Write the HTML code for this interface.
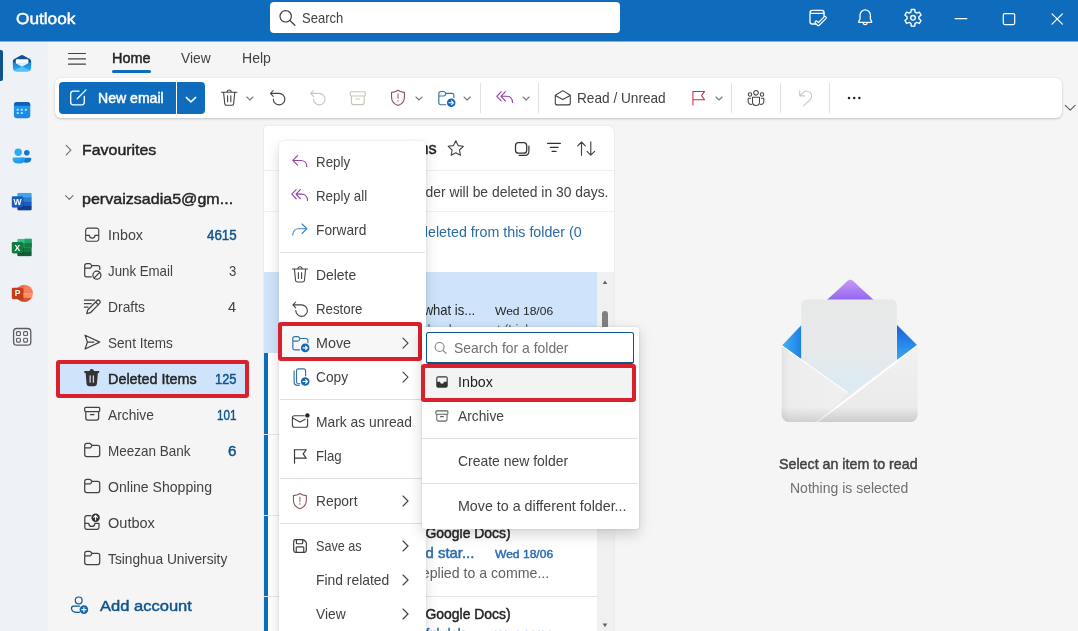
<!DOCTYPE html>
<html lang="en">
<head>
<meta charset="utf-8">
<title>Outlook</title>
<style>
*{box-sizing:border-box;margin:0;padding:0}
html,body{width:1078px;height:631px;overflow:hidden;background:#f5f5f5;font-family:"Liberation Sans",sans-serif;color:#242424}
.layer{position:absolute;left:0;top:0;width:1078px;height:631px;overflow:hidden;will-change:transform}
.layer>div,#list>div{position:absolute}
.t{position:absolute;white-space:nowrap;line-height:1;transform-origin:0 50%}
svg.ic{position:absolute;left:0;top:0;overflow:hidden}
#titlebar{left:0;top:0;width:1078px;height:41px;background:#0f6cbd}
#titleedge{left:0;top:41px;width:1078px;height:1px;background:#7fb0dc}
#rail{left:0;top:42px;width:48px;height:589px;background:#eef2f6}
#railactive{left:0;top:49.500px;width:2.500px;height:31px;background:#0f548c;border-radius:0 2px 2px 0}
#search{left:270px;top:2px;width:350px;height:31px;background:#fff;border-radius:4px}
#tabline{left:112px;top:69.700px;width:38.600px;height:3px;background:#0f6cbd;border-radius:2px}
#ribbon{left:55px;top:78px;width:1006.500px;height:40px;background:#fff;border-radius:6px;box-shadow:0 1px 2.500px rgba(0,0,0,.2),0 0 1px rgba(0,0,0,.12)}
#newmail{left:59px;top:82px;width:117px;height:31.700px;background:#0f6cbd;border-radius:4px 0 0 4px}
#newmaildd{left:177px;top:82px;width:28px;height:31.700px;background:#0f6cbd;border-radius:0 4px 4px 0}
.vsep{width:1px;background:#e0e0e0}
.sep{height:1px;background:#e0e0e0}
#delsel{left:60px;top:364.200px;width:185.500px;height:29.400px;background:#cfe4fa}
#list{left:263.500px;top:125.500px;width:350.500px;height:520px;background:#fff;border-radius:3px 6px 0 0;box-shadow:0 0 2px rgba(0,0,0,.12);overflow:hidden}
#selrow{left:0;top:146px;width:333px;height:81px;background:#cfe4fa}
.rowsep{left:0;width:350px;height:1px;background:#f0f0f0}
.rowsep2{left:0;width:333px;height:1px;background:#e6e6e6}
.ubar{left:.500px;width:4px;background:#0f6cbd}
#track{left:333px;top:146px;width:18px;height:374px;background:#f0f0f0}
#thumb{left:338.700px;top:185.500px;width:5.800px;height:120px;border-radius:3px;background:#808080}
#ctx{left:278.600px;top:140.600px;width:147.400px;height:500px;background:#fff;border-radius:5px;box-shadow:0 6px 14px rgba(0,0,0,.14),0 0 2.500px rgba(0,0,0,.13)}
#movehl{left:280px;top:324px;width:140px;height:35px;background:#f7f7f7}
#sub{left:422px;top:326.500px;width:217.200px;height:202.200px;background:#fff;border-radius:3px;box-shadow:0 5px 14px rgba(0,0,0,.17),0 0 3px rgba(0,0,0,.13)}
#fsearch{left:426px;top:332.200px;width:207.900px;height:31.800px;background:#fff;border:1.700px solid #0f548c;border-bottom-width:2px;border-radius:2.500px}
#inboxhl{left:423px;top:366px;width:211px;height:34px;background:#f3f3f3}
.redbox{position:absolute;border:4px solid #d9212e;border-radius:3px}

</style>
</head>
<body>
<div class="layer" id="base">
<div id="titlebar"></div><div id="titleedge"></div>
<div id="rail"></div><div id="railactive"></div>
<div id="search"></div>
<div id="tabline"></div>
<div id="ribbon"></div>
<div id="newmail"></div><div id="newmaildd"></div>
<div class="vsep" style="left:480px;top:83px;height:30px"></div>
<div class="vsep" style="left:538px;top:83px;height:30px"></div>
<div class="vsep" style="left:731px;top:83px;height:30px"></div>
<div class="vsep" style="left:780px;top:83px;height:30px"></div>
<div class="vsep" style="left:829px;top:83px;height:30px"></div>
<div id="delsel"></div>
<div id="list">
 <div id="selrow"></div>
 <div class="rowsep" style="top:44px"></div>
 <div class="rowsep" style="top:85px"></div>
 <div class="rowsep2" style="top:308px"></div>
 <div class="rowsep2" style="top:389px"></div>
 <div class="rowsep2" style="top:470px"></div>
 <div class="ubar" style="top:227.500px;height:80.500px"></div>
 <div class="ubar" style="top:309px;height:80px"></div>
 <div class="ubar" style="top:390px;height:80px"></div>
 <div class="ubar" style="top:471px;height:80px"></div>
 <div id="track"></div><div id="thumb"></div>
</div>
<svg class="ic" width="60" height="631" viewBox="0 0 60 631">
<defs>
<linearGradient id="mg1" x1="0" y1="0" x2="0" y2="1"><stop offset="0" stop-color="#1b78d0"/><stop offset="1" stop-color="#35b5f2"/></linearGradient>
<linearGradient id="cg1" x1="0" y1="0" x2="0" y2="1"><stop offset="0" stop-color="#229cf0"/><stop offset="1" stop-color="#1b86e2"/></linearGradient>
<linearGradient id="pg1" x1="0" y1="0" x2="1" y2="1"><stop offset="0" stop-color="#2bb0f2"/><stop offset="1" stop-color="#1d8fe6"/></linearGradient>
<clipPath id="ppc"><circle cx="24.2" cy="293.4" r="8.7"/></clipPath>
</defs>
<path fill="#0f4f94" d="M12.900 65v-3.600c0-1 .5-1.800 1.400-2.300l6.800-3.900a1.800 1.800 0 0 1 1.800 0l6.800 3.900c.9.5 1.400 1.300 1.400 2.300V65z"/>
<rect x="15.800" y="59.200" width="12.600" height="8" rx="1.400" fill="#ffffff"/>
<path fill="#d9effc" d="M15.800 62.600h12.600v4H15.800z"/>
<path fill="url(#mg1)" d="M12.900 61.700l9.100 5 9.100-5v5.800a4 4 0 0 1-4 4H16.900a4 4 0 0 1-4-4z"/>
<path fill="#52c8f8" opacity=".9" d="M14.100 70.300L22 66.500l7.900 3.800a4 4 0 0 1-2.800 1.200H16.900a4 4 0 0 1-2.800-1.200z"/>
<rect x="13.900" y="101.900" width="16.400" height="16.300" rx="3.300" fill="url(#cg1)"/>
<path fill="#0f60b6" d="M13.900 105.700v-.5a3.300 3.300 0 0 1 3.300-3.300h9.800a3.300 3.300 0 0 1 3.300 3.300v.5z"/>
<rect x="16.70" y="108.800" width="2" height="2" rx=".6" fill="#a5ecff"/>
<rect x="20.80" y="108.800" width="2" height="2" rx=".6" fill="#a5ecff"/>
<rect x="24.80" y="108.800" width="2" height="2" rx=".6" fill="#a5ecff"/>
<rect x="16.70" y="112.100" width="2" height="2" rx=".6" fill="#a5ecff"/>
<rect x="20.80" y="112.100" width="2" height="2" rx=".6" fill="#a5ecff"/>
<circle cx="26.800" cy="152.700" r="2.800" fill="#1678d3"/>
<path fill="#1678d3" d="M20.500 157.700h9.500a1.300 1.300 0 0 1 1.300 1.300c0 2.200-1.900 3.700-4.700 3.700s-6.100-1.500-6.100-5z"/>
<circle cx="18.200" cy="152.300" r="3.700" fill="#2aaef3"/>
<path fill="url(#pg1)" d="M13.900 157.600h9.800a1.300 1.300 0 0 1 1.300 1.300c0 2.800-2.400 4.700-6.200 4.700s-6.200-1.900-6.200-4.700a1.300 1.300 0 0 1 1.300-1.300z"/>
<clipPath id="ocW"><rect x="17.2" y="192.8" width="14.6" height="17.6" rx="1.300"/></clipPath>
<g clip-path="url(#ocW)">
<rect x="17.2" y="192.80" width="14.6" height="4.70" fill="#41a5ee"/>
<rect x="17.2" y="197.20" width="14.6" height="4.70" fill="#2b7cd3"/>
<rect x="17.2" y="201.60" width="14.6" height="4.70" fill="#185abd"/>
<rect x="17.2" y="206.00" width="14.6" height="4.70" fill="#103f91"/>
</g>
<rect x="12.600" y="197.0" width="11.200" height="11.200" rx="1.200" fill="#000" opacity=".18"/>
<rect x="11.800" y="196.2" width="11.200" height="11.200" rx="1.200" fill="#1a5dbe"/>
<text x="17.400" y="204.8" font-family="Liberation Sans, sans-serif" font-weight="700" font-size="8.500" fill="#fff" text-anchor="middle">W</text>
<clipPath id="ocX"><rect x="17.2" y="238.7" width="14.6" height="17.6" rx="1.300"/></clipPath>
<g clip-path="url(#ocX)">
<rect x="17.2" y="238.70" width="14.6" height="4.70" fill="#33c481"/>
<rect x="17.2" y="243.10" width="14.6" height="4.70" fill="#21a366"/>
<rect x="17.2" y="247.50" width="14.6" height="4.70" fill="#107c41"/>
<rect x="17.2" y="251.90" width="14.6" height="4.70" fill="#185c37"/>
</g>
<rect x="12.600" y="242.9" width="11.200" height="11.200" rx="1.200" fill="#000" opacity=".18"/>
<rect x="11.800" y="242.1" width="11.200" height="11.200" rx="1.200" fill="#107c41"/>
<text x="17.400" y="250.7" font-family="Liberation Sans, sans-serif" font-weight="700" font-size="8.500" fill="#fff" text-anchor="middle">X</text>
<rect x="24.500" y="238.700" width="7.300" height="4.400" fill="#21a366"/><rect x="24.500" y="243.100" width="7.300" height="4.400" fill="#107c41"/><rect x="24.500" y="247.500" width="7.300" height="4.400" fill="#185c37" opacity=".0"/>
<g clip-path="url(#ppc)"><rect x="15" y="284" width="18" height="9.400" fill="#ed6c47"/><rect x="15" y="293.400" width="18" height="5" fill="#ff8f6b"/><rect x="15" y="297.800" width="18" height="5" fill="#d35230"/><rect x="24.200" y="284" width="9" height="9.400" fill="#ff8f6b" opacity=".55"/></g>
<rect x="12.600" y="288.500" width="11.200" height="11.200" rx="1.200" fill="#000" opacity=".18"/>
<rect x="11.800" y="287.700" width="11.200" height="11.200" rx="1.200" fill="#c43e1c"/>
<text x="17.500" y="296.400" font-family="Liberation Sans, sans-serif" font-weight="700" font-size="8.500" fill="#fff" text-anchor="middle">P</text>
<rect x="13.600" y="328.500" width="17.200" height="16.700" rx="3.200" fill="none" stroke="#5c5c5c" stroke-width="1.300"/>
<rect x="16.5" y="331.6" width="3.900" height="3.900" rx="1" fill="none" stroke="#5c5c5c" stroke-width="1.100"/>
<rect x="16.5" y="338.2" width="3.900" height="3.900" rx="1" fill="none" stroke="#5c5c5c" stroke-width="1.100"/>
<rect x="23.6" y="331.6" width="3.900" height="3.900" rx="1" fill="none" stroke="#5c5c5c" stroke-width="1.100"/>
<rect x="23.6" y="338.2" width="3.900" height="3.900" rx="1" fill="none" stroke="#5c5c5c" stroke-width="1.100"/>
</svg>
<svg class="ic" width="1078" height="631" viewBox="0 0 1078 631">
<defs>
<linearGradient id="ev1" x1="0" y1="0" x2="0" y2="1"><stop offset="0" stop-color="#c79bf5"/><stop offset="1" stop-color="#8d5ff0"/></linearGradient>
<linearGradient id="ev2" x1="0" y1="0" x2="0" y2="1"><stop offset="0" stop-color="#e8e8e8"/><stop offset=".4" stop-color="#e7e9ea"/><stop offset="1" stop-color="#d6ebf8"/></linearGradient>
<linearGradient id="ev3" x1="0" y1="0" x2="1" y2="0"><stop offset="0" stop-color="#45b2f4"/><stop offset="1" stop-color="#1c7fe2"/></linearGradient>
<linearGradient id="ev4" x1="0" y1="0" x2="0" y2="1"><stop offset="0" stop-color="#1560dc"/><stop offset="1" stop-color="#3aaaf2"/></linearGradient>
<linearGradient id="ev5" x1="0" y1="0" x2="0" y2="1"><stop offset="0" stop-color="#eeeeee"/><stop offset=".78" stop-color="#e9e9e9"/><stop offset="1" stop-color="#cfcfcf"/></linearGradient>
<linearGradient id="ev6" x1="0" y1="0" x2="1" y2="0"><stop offset="0" stop-color="#e2e2e2"/><stop offset=".12" stop-color="#ededed"/><stop offset="1" stop-color="#f0f0f0"/></linearGradient>
<linearGradient id="ev7" x1="0" y1="0" x2="0" y2="1"><stop offset="0" stop-color="#f1f1f1"/><stop offset="1" stop-color="#e9e9e9"/></linearGradient>
<linearGradient id="ev8" x1="0" y1="0" x2="0" y2="1"><stop offset="0" stop-color="#000" stop-opacity="0"/><stop offset="1" stop-color="#000" stop-opacity=".13"/></linearGradient>
<clipPath id="evc"><path d="M781.600 330h136v84.500a7.500 7.500 0 0 1-7.500 7.500H789.100a7.500 7.500 0 0 1-7.500-7.500z"/></clipPath>
</defs>
<path fill="url(#ev1)" d="M843 285.200C847 281.300 848.300 279.800 850.300 279.800C852.300 279.800 853.600 281.300 857.600 285.200L876 302H824.600z"/>
<path fill="url(#ev3)" d="M782 345.500l19.500-20.500v36z"/>
<path fill="url(#ev4)" d="M917.500 345.500l-20.500-20.500v36z"/>
<rect x="801.300" y="299.500" width="95.400" height="112" rx="5" fill="url(#ev2)"/>
<g clip-path="url(#evc)">
<path fill="url(#ev5)" d="M781.600 345.200l68 48.500 68-48.500v77h-136z"/>
<path fill="url(#ev6)" d="M781.600 345.200L848 392.600 818 423h-36.400z"/>
<path fill="url(#ev7)" d="M917.600 345v78H816z"/>
<path fill="none" stroke="#ffffff" stroke-width="1.800" stroke-linecap="round" d="M917.400 345.800L816.500 422.500"/>
<path fill="none" stroke="#ffffff" stroke-width="1.100" opacity=".85" stroke-linecap="round" d="M782 346l65 46.200"/>
<rect x="781" y="407" width="138" height="15.500" fill="url(#ev8)"/>
</g>
</svg>
<svg class="ic" width="1078" height="631" viewBox="0 0 1078 631">
<circle cx="285.700" cy="16.300" r="5.700" fill="none" stroke="#424242" stroke-width="1.2" stroke-linecap="round" stroke-linejoin="round"/><path fill="none" stroke="#424242" stroke-width="1.3" stroke-linecap="round" stroke-linejoin="round" d="M289.900 20.500l5 4.700"/>
<path fill="none" stroke="#ffffff" stroke-width="1.3" stroke-linecap="round" stroke-linejoin="round" d="M816 24h-3.700a2.300 2.300 0 0 1-2.300-2.300v-9a2.300 2.300 0 0 1 2.300-2.300h9.500a2.300 2.300 0 0 1 2.300 2.300v4.300M810.200 13.400h13.700"/>
<path fill="none" stroke="#fff" stroke-width="3.700" stroke-linecap="round" stroke-linejoin="round" d="M816.300 22.300l2.100 2.100 6.600-6.600"/>
<path fill="none" stroke="#0f6cbd" stroke-width="1.300" stroke-linecap="round" stroke-linejoin="round" d="M816.300 22.300l2.100 2.100 6.600-6.600"/>
<path fill="none" stroke="#ffffff" stroke-width="1.3" stroke-linecap="round" stroke-linejoin="round" d="M865.200 9.900a5.200 5.200 0 0 0-5.200 5.200v3.900l-1.300 2.500a.6.600 0 0 0 .5.900h12a.6.600 0 0 0 .5-.9l-1.300-2.500v-3.900a5.200 5.200 0 0 0-5.200-5.200zM863.100 22.900a2.150 2.150 0 0 0 4.200 0"/>
<path fill="none" stroke="#fff" stroke-width="1.400" stroke-linejoin="round" d="M911.31 9.47L914.69 9.47L915.11 12.18L916.81 13.16L919.37 12.17L921.06 15.10L918.92 16.82L918.92 18.78L921.06 20.50L919.37 23.43L916.81 22.44L915.11 23.42L914.69 26.13L911.31 26.13L910.89 23.42L909.19 22.44L906.63 23.43L904.94 20.50L907.08 18.78L907.08 16.82L904.94 15.10L906.63 12.17L909.19 13.16L910.89 12.18z"/><circle cx="913.0" cy="17.8" r="2.300" fill="none" stroke="#ffffff" stroke-width="1.4" stroke-linecap="round" stroke-linejoin="round"/>
<path fill="none" stroke="#ffffff" stroke-width="1.2" stroke-linecap="round" stroke-linejoin="round" d="M955.200 18.700h11.600"/>
<rect x="1003.300" y="13.600" width="11.400" height="11" rx="1.500" fill="none" stroke="#ffffff" stroke-width="1.2" stroke-linecap="round" stroke-linejoin="round"/>
<path fill="none" stroke="#ffffff" stroke-width="1.2" stroke-linecap="round" stroke-linejoin="round" d="M1052 13.800l10.400 10.400M1062.400 13.800L1052 24.200"/>
<path fill="none" stroke="#424242" stroke-width="1.2" stroke-linecap="round" stroke-linejoin="round" d="M68.500 53.500h17M68.500 58.800h17M68.500 64.200h17"/>
<path fill="none" stroke="#ffffff" stroke-width="1.3" stroke-linecap="round" stroke-linejoin="round" d="M79 91.200h-5.800a2.500 2.500 0 0 0-2.500 2.500v8.600a2.500 2.500 0 0 0 2.500 2.500h8.600a2.500 2.500 0 0 0 2.500-2.500v-5.800M77.200 98.700l8.800-8.800"/>
<path fill="none" stroke="#ffffff" stroke-width="1.5" stroke-linecap="round" stroke-linejoin="round" d="M186.200 97.400l4.750 4.500 4.750-4.500"/>
<g transform="translate(219.20 87.80) scale(1.0000)" ><path fill="none" stroke="#434343" stroke-width="1.1" stroke-linecap="round" stroke-linejoin="round" d="M8 4.200a2 2 0 0 1 4 0M2.300 4.500h15.400M4.400 4.500l1.150 11.300a1.900 1.900 0 0 0 1.900 1.700h5.100a1.900 1.900 0 0 0 1.900-1.700l1.150-11.300M8.400 8v6M11.600 8v6"/></g>
<g transform="translate(246.20 96.30) scale(1.0000)" ><path fill="none" stroke="#7a7a7a" stroke-width="1.1" stroke-linecap="round" stroke-linejoin="round" d="M.6.700l3.100 3 3.100-3"/></g>
<g transform="translate(270.5 93.4)"><path fill="none" stroke="#434343" stroke-width="1.1" stroke-linecap="round" stroke-linejoin="round" d="M2.7 -2.900L0 0l2.700 2.900M0 0h8.600a5.750 5.750 0 1 1-5.750 5.750"/></g>
<g transform="translate(310.7 93.4)"><path fill="none" stroke="#c6c6c6" stroke-width="1.1" stroke-linecap="round" stroke-linejoin="round" d="M2.7 -2.900L0 0l2.700 2.900M0 0h8.600a5.750 5.750 0 1 1-5.750 5.750"/></g>
<g transform="translate(347.80 88.20) scale(1.0000)" ><path fill="none" stroke="#c3c9ad" stroke-width="1.1" stroke-linecap="round" stroke-linejoin="round" d="M2.500 4.600a1 1 0 0 1 1-1h13a1 1 0 0 1 1 1v2.200a1 1 0 0 1-1 1h-13a1 1 0 0 1-1-1zM3.600 7.800v6.600a2 2 0 0 0 2 2h8.800a2 2 0 0 0 2-2V7.800M8.200 10.800h3.600"/></g>
<g transform="translate(388.80 88.10) scale(0.9200)" ><path fill="none" stroke="#8f5258" stroke-width="1.2" stroke-linecap="round" stroke-linejoin="round" d="M10 2.400c2 1.500 4.200 2.200 7 2.300v5.200c0 4.200-2.600 7.400-7 9-4.400-1.600-7-4.800-7-9v-5.200c2.800-.1 5-.8 7-2.300z"/><path fill="none" stroke="#b47880" stroke-width="1.4" stroke-linecap="round" stroke-linejoin="round" d="M10 6.300v4.800"/><circle cx="10" cy="13.700" r=".9" fill="#b47880"/></g>
<g transform="translate(415.30 96.30) scale(1.0000)" ><path fill="none" stroke="#7a7a7a" stroke-width="1.1" stroke-linecap="round" stroke-linejoin="round" d="M.6.700l3.100 3 3.100-3"/></g>
<g transform="translate(436.40 88.40) scale(1.0000)" ><path fill="none" stroke="#2f73a6" stroke-width="1.15" stroke-linecap="round" stroke-linejoin="round" d="M9.2 16.3H4.3a1.9 1.9 0 0 1-1.9-1.9V5a1.9 1.9 0 0 1 1.9-1.9h2.9c.5 0 1 .2 1.3.6l1.2 1.3h5.9a1.9 1.9 0 0 1 1.9 1.9v2.3M2.4 7.6h4.9c.5 0 1-.2 1.3-.6L9.7 5"/><circle cx="14.800" cy="14.400" r="4.300" fill="#1469b5"/><path fill="none" stroke="#fff" stroke-width="1.1" stroke-linecap="round" stroke-linejoin="round" d="M12.600 14.400h4.300M15.200 12.600l1.800 1.800-1.800 1.800"/></g>
<g transform="translate(463.40 96.30) scale(1.0000)" ><path fill="none" stroke="#7a7a7a" stroke-width="1.1" stroke-linecap="round" stroke-linejoin="round" d="M.6.700l3.100 3 3.100-3"/></g>
<g transform="translate(495.30 88.30) scale(0.9500)" ><path fill="none" stroke="#8e44a3" stroke-width="1.2" stroke-linecap="round" stroke-linejoin="round" d="M6.2 3.6L1.6 8.4l4.6 4.8M10.6 3.6L6 8.4l4.6 4.8M6.3 8.4h5.6c3.6 0 6.2 2.6 6.2 6.6"/></g>
<g transform="translate(522.40 96.30) scale(1.0000)" ><path fill="none" stroke="#7a7a7a" stroke-width="1.1" stroke-linecap="round" stroke-linejoin="round" d="M.6.700l3.100 3 3.100-3"/></g>
<g transform="translate(552.80 87.60) scale(1.0000)" ><path fill="none" stroke="#434343" stroke-width="1.1" stroke-linecap="round" stroke-linejoin="round" d="M2.5 7.6L10 3l7.5 4.6v7.7a2 2 0 0 1-2 2h-11a2 2 0 0 1-2-2zM2.6 7.8L10 12l7.4-4.2"/></g>
<g transform="translate(689.50 88.20) scale(0.9500)" ><path fill="none" stroke="#c4314b" stroke-width="1.1" stroke-linecap="round" stroke-linejoin="round" d="M3.6 17.6V3.2M3.6 3.4h12.3l-3.2 4.4 3.2 4.4H3.6"/></g>
<g transform="translate(715.30 96.30) scale(1.0000)" ><path fill="none" stroke="#7a7a7a" stroke-width="1.1" stroke-linecap="round" stroke-linejoin="round" d="M.6.700l3.100 3 3.100-3"/></g>
<g transform="translate(746.00 88.20) scale(1.0000)" ><circle cx="10" cy="4.6" r="2.3" fill="none" stroke="#434343" stroke-width="1.05" stroke-linecap="round" stroke-linejoin="round"/><circle cx="4" cy="6.2" r="1.7" fill="none" stroke="#434343" stroke-width="1.05" stroke-linecap="round" stroke-linejoin="round"/><circle cx="16" cy="6.2" r="1.7" fill="none" stroke="#434343" stroke-width="1.05" stroke-linecap="round" stroke-linejoin="round"/><path fill="none" stroke="#434343" stroke-width="1.05" stroke-linecap="round" stroke-linejoin="round" d="M6.5 9h7v4.8a3.5 3.5 0 0 1-7 0zM4.6 10H2.2v3.4a2.8 2.8 0 0 0 3.6 2.7M15.4 10h2.4v3.4a2.8 2.8 0 0 1-3.6 2.7"/></g>
<g transform="translate(796.50 88.40) scale(0.9500)" ><path fill="none" stroke="#c8c8c8" stroke-width="1.2" stroke-linecap="round" stroke-linejoin="round" d="M3.4 2.6v5.2h5.2M3.8 7.4l3.4-3.1a5.2 5.2 0 0 1 7.2 7.5l-7 6.6"/></g>
<circle cx="849" cy="98" r="1.250" fill="#242424"/><circle cx="854.200" cy="98" r="1.250" fill="#242424"/><circle cx="859.400" cy="98" r="1.250" fill="#242424"/>
<path fill="none" stroke="#616161" stroke-width="1.2" stroke-linecap="round" stroke-linejoin="round" d="M1065.300 105.300l4.900 4.900 4.900-4.900"/>
<path fill="none" stroke="#707070" stroke-width="1.15" stroke-linecap="round" stroke-linejoin="round" d="M66.200 145.400l4.700 4.700-4.700 4.700"/>
<path fill="none" stroke="#707070" stroke-width="1.15" stroke-linecap="round" stroke-linejoin="round" d="M65.600 195.700l3.700 3.700 3.700-3.700"/>
<g transform="translate(83.10 225.60) scale(0.9100)" ><path fill="none" stroke="#424242" stroke-width="1.25" stroke-linecap="round" stroke-linejoin="round" d="M2.8 5.2a2.4 2.4 0 0 1 2.4-2.4h9.6a2.4 2.4 0 0 1 2.4 2.4v9.6a2.4 2.4 0 0 1-2.4 2.4H5.2a2.4 2.4 0 0 1-2.4-2.4zM2.9 10.8h4.1a3 3 0 0 0 6 0h4.1"/></g>
<g transform="translate(82.30 260.60) scale(1.0000)" ><path fill="none" stroke="#424242" stroke-width="1.25" stroke-linecap="round" stroke-linejoin="round" d="M9 16.2H4.3a1.9 1.9 0 0 1-1.9-1.9V5a1.9 1.9 0 0 1 1.9-1.9h2.9c.5 0 1 .2 1.3.6l1.2 1.3h5.9a1.9 1.9 0 0 1 1.9 1.9v2.1M2.4 7.6h4.9c.5 0 1-.2 1.3-.6L9.7 5"/><circle cx="14.6" cy="14.6" r="4" fill="none" stroke="#424242" stroke-width="1.25" stroke-linecap="round" stroke-linejoin="round"/><path fill="none" stroke="#424242" stroke-width="1.25" stroke-linecap="round" stroke-linejoin="round" d="M11.9 17.3l5.4-5.4"/></g>
<g transform="translate(82.00 296.60) scale(1.0000)" ><path fill="none" stroke="#424242" stroke-width="1.25" stroke-linecap="round" stroke-linejoin="round" d="M2.4 3.6h10.2M2.4 7.1h6.8M2.4 10.6h3.6"/><path fill="none" stroke="#424242" stroke-width="1.25" stroke-linecap="round" stroke-linejoin="round" d="M14.9 4.1a1.9 1.9 0 0 1 2.7 2.7l-9.2 9.3-3.7 1 1-3.7zM13.6 5.4l2.7 2.7"/></g>
<g transform="translate(82.20 332.10) scale(1.0000)" ><path fill="none" stroke="#424242" stroke-width="1.25" stroke-linecap="round" stroke-linejoin="round" d="M2.9 3.1l14.6 6.9-14.6 6.9 2.3-6.9zM5.2 10h6.4"/></g>
<g transform="translate(81.00 367.20) scale(1.0750)" ><path fill="#333" d="M8 3.6a2 2 0 0 1 4 0h4.2a.9.9 0 0 1 0 1.8h-.5l-.9 10.3a2.2 2.2 0 0 1-2.2 2H7.4a2.2 2.2 0 0 1-2.2-2L4.3 5.4h-.5a.9.9 0 0 1 0-1.8z"/><path fill="none" stroke="#cfe4fa" stroke-width="1.1" stroke-linecap="round" d="M8.5 8v6M11.5 8v6"/></g>
<g transform="translate(82.20 403.70) scale(1.0000)" ><path fill="none" stroke="#424242" stroke-width="1.25" stroke-linecap="round" stroke-linejoin="round" d="M2.500 4.600a1 1 0 0 1 1-1h13a1 1 0 0 1 1 1v2.200a1 1 0 0 1-1 1h-13a1 1 0 0 1-1-1zM3.600 7.800v6.600a2 2 0 0 0 2 2h8.800a2 2 0 0 0 2-2V7.800M8.200 10.800h3.600"/></g>
<g transform="translate(82.20 440.00) scale(1.0000)" ><path fill="none" stroke="#424242" stroke-width="1.25" stroke-linecap="round" stroke-linejoin="round" d="M2.5 5.4a2 2 0 0 1 2-2h2.8c.5 0 1 .2 1.3.6l1.3 1.4h5.6a2 2 0 0 1 2 2v7.2a2 2 0 0 1-2 2h-11a2 2 0 0 1-2-2zM2.5 7.9h4.8c.5 0 1-.2 1.3-.6l1.3-1.9"/></g>
<g transform="translate(82.20 476.00) scale(1.0000)" ><path fill="none" stroke="#424242" stroke-width="1.25" stroke-linecap="round" stroke-linejoin="round" d="M2.5 5.4a2 2 0 0 1 2-2h2.8c.5 0 1 .2 1.3.6l1.3 1.4h5.6a2 2 0 0 1 2 2v7.2a2 2 0 0 1-2 2h-11a2 2 0 0 1-2-2zM2.5 7.9h4.8c.5 0 1-.2 1.3-.6l1.3-1.9"/></g>
<g transform="translate(82.20 512.00) scale(1.0000)" ><path fill="none" stroke="#424242" stroke-width="1.25" stroke-linecap="round" stroke-linejoin="round" d="M8.6 3.6H5a2.4 2.4 0 0 0-2.4 2.4v9A2.4 2.4 0 0 0 5 17.4h9.4a2.4 2.4 0 0 0 2.4-2.4v-3.4M2.7 11.4h3.9a3 3 0 0 0 6 0h4"/><circle cx="13.400" cy="5.700" r="4.200" fill="#333"/><path fill="none" stroke="#fff" stroke-width="1.1" stroke-linecap="round" stroke-linejoin="round" d="M13.400 8V3.500M11.600 5.300l1.800-1.800 1.800 1.800"/></g>
<g transform="translate(82.20 548.00) scale(1.0000)" ><path fill="none" stroke="#424242" stroke-width="1.25" stroke-linecap="round" stroke-linejoin="round" d="M2.5 5.4a2 2 0 0 1 2-2h2.8c.5 0 1 .2 1.3.6l1.3 1.4h5.6a2 2 0 0 1 2 2v7.2a2 2 0 0 1-2 2h-11a2 2 0 0 1-2-2zM2.5 7.9h4.8c.5 0 1-.2 1.3-.6l1.3-1.9"/></g>
<g transform="translate(68.50 595.50) scale(1.0000)" ><circle cx="10.200" cy="4.900" r="3.400" fill="none" stroke="#0f548c" stroke-width="1.2" stroke-linecap="round" stroke-linejoin="round"/><path fill="none" stroke="#0f548c" stroke-width="1.2" stroke-linecap="round" stroke-linejoin="round" d="M11 10.600H5.200a2.200 2.200 0 0 0-2.200 2.200c0 2.400 2.100 4.100 5.900 4.100.8 0 1.500-.1 2.100-.2"/><circle cx="15.400" cy="14.100" r="4.300" fill="#1467b0"/><path fill="none" stroke="#fff" stroke-width="1.200" stroke-linecap="round" d="M15.400 12v4.200M13.300 14.100h4.200"/></g>
<g transform="translate(445.80 138.30) scale(1.0000)" ><path fill="none" stroke="#434343" stroke-width="1.1" stroke-linecap="round" stroke-linejoin="round" d="M10 2.4l2.3 4.9 5.3.7-3.900 3.700.950 5.300L10 14.400l-4.650 2.600.950-5.300L2.400 8l5.300-.7z"/></g>
<rect x="515.500" y="142.700" width="11.200" height="10.500" rx="3" fill="none" stroke="#333" stroke-width="1.25" stroke-linecap="round" stroke-linejoin="round"/><path fill="none" stroke="#333" stroke-width="1.2" stroke-linecap="round" stroke-linejoin="round" d="M528.900 146.200v5.600a3.500 3.500 0 0 1-3.500 3.500h-6.300"/>
<path fill="none" stroke="#333" stroke-width="1.35" stroke-linecap="round" stroke-linejoin="round" d="M547.600 143.300h12.800M550.500 147.400h7.400M552.200 151.400h3.800"/>
<path fill="none" stroke="#434343" stroke-width="1.15" stroke-linecap="round" stroke-linejoin="round" d="M581.500 155.300v-13.200M577.700 145.800l3.800-3.800 3.800 3.800M590.800 141.900v13.200M587 151.400l3.800 3.800 3.800-3.800"/>
<path fill="#616161" d="M602.700 284l2.300-3.600 2.300 3.600z"/><path fill="#616161" d="M602.700 623.600l2.300 3.600 2.300-3.600z"/>
</svg>
<span class="t" style="left:15.8px;top:10.6px;font-size:15.8px;color:#ffffff;transform:scaleX(1.0908) rotate(0.03deg);-webkit-text-stroke:.45px #ffffff">Outlook</span>
<span class="t" style="left:302.0px;top:11.0px;font-size:14.2px;color:#424242;transform:scaleX(0.9187)">Search</span>
<span class="t" style="left:112.0px;top:51.0px;font-size:14.2px;color:#242424;transform:scaleX(1.0196);-webkit-text-stroke:.45px #242424">Home</span>
<span class="t" style="left:181.0px;top:51.0px;font-size:14.2px;color:#424242;transform:scaleX(0.9738)">View</span>
<span class="t" style="left:241.9px;top:51.0px;font-size:14.2px;color:#424242;transform:scaleX(0.9901)">Help</span>
<span class="t" style="left:97.8px;top:91.0px;font-size:14.2px;color:#ffffff;transform:scaleX(0.9919);-webkit-text-stroke:.45px #ffffff">New email</span>
<span class="t" style="left:577.2px;top:91.0px;font-size:14.2px;color:#424242;transform:scaleX(0.9612)">Read / Unread</span>
<span class="t" style="left:82.0px;top:142.0px;font-size:15.3px;color:#242424;transform:scaleX(1.0403);-webkit-text-stroke:.45px #242424">Favourites</span>
<span class="t" style="left:82.0px;top:191.0px;font-size:15.3px;color:#242424;transform:scaleX(1.0499);-webkit-text-stroke:.45px #242424">pervaizsadia5@gm...</span>
<span class="t" style="left:108.1px;top:228.0px;font-size:14.2px;color:#424242;transform:scaleX(1.0081)">Inbox</span>
<span class="t" style="left:206.7px;top:228.0px;font-size:14.2px;color:#0f548c;transform:scaleX(0.9410);-webkit-text-stroke:.45px #0f548c">4615</span>
<span class="t" style="left:108.1px;top:264.0px;font-size:14.2px;color:#424242;transform:scaleX(0.9353)">Junk Email</span>
<span class="t" style="left:229.1px;top:264.0px;font-size:14.2px;color:#424242;transform:scaleX(0.9251)">3</span>
<span class="t" style="left:108.1px;top:300.0px;font-size:14.2px;color:#424242;transform:scaleX(0.9777)">Drafts</span>
<span class="t" style="left:228.3px;top:300.0px;font-size:14.2px;color:#424242;transform:scaleX(1.0265)">4</span>
<span class="t" style="left:108.1px;top:336.0px;font-size:14.2px;color:#424242;transform:scaleX(0.9568)">Sent Items</span>
<span class="t" style="left:108.1px;top:372.0px;font-size:14.2px;color:#242424;transform:scaleX(1.0134);-webkit-text-stroke:.45px #242424">Deleted Items</span>
<span class="t" style="left:214.9px;top:372.0px;font-size:14.2px;color:#0f548c;transform:scaleX(0.9083);-webkit-text-stroke:.45px #0f548c">125</span>
<span class="t" style="left:108.1px;top:408.0px;font-size:14.2px;color:#424242;transform:scaleX(0.9701)">Archive</span>
<span class="t" style="left:216.9px;top:408.0px;font-size:14.2px;color:#0f548c;transform:scaleX(0.8238);-webkit-text-stroke:.45px #0f548c">101</span>
<span class="t" style="left:108.1px;top:444.0px;font-size:14.2px;color:#424242;transform:scaleX(0.9520)">Meezan Bank</span>
<span class="t" style="left:228.0px;top:444.0px;font-size:14.2px;color:#0f548c;transform:scaleX(1.0646);-webkit-text-stroke:.45px #0f548c">6</span>
<span class="t" style="left:108.1px;top:480.0px;font-size:14.2px;color:#424242;transform:scaleX(0.9912)">Online Shopping</span>
<span class="t" style="left:108.1px;top:516.0px;font-size:14.2px;color:#424242;transform:scaleX(1.0251)">Outbox</span>
<span class="t" style="left:108.1px;top:552.0px;font-size:14.2px;color:#424242;transform:scaleX(0.9698)">Tsinghua University</span>
<span class="t" style="left:99.5px;top:598.0px;font-size:15.3px;color:#0f548c;transform:scaleX(1.0806);-webkit-text-stroke:.45px #0f548c">Add account</span>
<span class="t" style="left:336.4px;top:140.0px;font-size:17px;color:#242424;transform:scaleX(0.9600);-webkit-text-stroke:.45px #242424;clip-path:inset(-3px -3px -3px 91.2px)">Deleted Items</span>
<span class="t" style="left:333.2px;top:185.0px;font-size:14.2px;color:#424242;transform:scaleX(0.9785)">Items in this folder will be deleted in 30 days.</span>
<span class="t" style="left:325.4px;top:225.0px;font-size:14.2px;color:#2b6ca3;transform:scaleX(1.0047)">Recover items deleted from this folder (0</span>
<span class="t" style="left:382.8px;top:303.0px;font-size:14.2px;color:#242424;transform:scaleX(0.9202)">Sadia: what is...</span>
<span class="t" style="left:494.5px;top:306.0px;font-size:11.8px;color:#242424;transform:scaleX(1.0221)">Wed 18/06</span>
<span class="t" style="left:354.7px;top:323.0px;font-size:14.2px;color:#616161;transform:scaleX(0.9000)">Sadia shared a document (Links...</span>
<span class="t" style="left:330.8px;top:526.0px;font-size:14.2px;color:#242424;transform:scaleX(0.9821);-webkit-text-stroke:.45px #242424">Sadia Pervaiz (Google Docs)</span>
<span class="t" style="left:336.3px;top:546.0px;font-size:14.2px;color:#2b6cb0;transform:scaleX(1.0509);-webkit-text-stroke:.45px #2b6cb0">Getting started star...</span>
<span class="t" style="left:494.5px;top:549.0px;font-size:11.8px;color:#2b6cb0;transform:scaleX(1.0221);-webkit-text-stroke:.45px #2b6cb0">Wed 18/06</span>
<span class="t" style="left:376.9px;top:566.0px;font-size:14.2px;color:#616161;transform:scaleX(0.9969)">Sadia replied to a comme...</span>
<span class="t" style="left:330.8px;top:607.0px;font-size:14.2px;color:#242424;transform:scaleX(0.9821);-webkit-text-stroke:.45px #242424">Sadia Pervaiz (Google Docs)</span>
<span class="t" style="left:378.9px;top:627.0px;font-size:14.2px;color:#2b6cb0;transform:scaleX(0.9000);-webkit-text-stroke:.45px #2b6cb0">Untitled fuhdok...</span>
<span class="t" style="left:494.5px;top:630.0px;font-size:11.8px;color:#2b6cb0;transform:scaleX(1.0221);-webkit-text-stroke:.45px #2b6cb0">Wed 18/06</span>
<span class="t" style="left:779.2px;top:457.0px;font-size:14.2px;color:#424242;transform:scaleX(1.0042);-webkit-text-stroke:.45px #424242">Select an item to read</span>
<span class="t" style="left:789.5px;top:481.0px;font-size:14.2px;color:#707070;transform:scaleX(0.9869)">Nothing is selected</span>
</div>
<div class="layer" id="l2">
<div id="ctx"></div>
<div id="movehl"></div>
<div class="sep" style="left:280px;top:252px;width:145px"></div>
<div class="sep" style="left:280px;top:399px;width:145px"></div>
<div class="sep" style="left:280px;top:478px;width:145px"></div>
<div class="sep" style="left:280px;top:523px;width:145px"></div>
<svg class="ic" width="1078" height="631" viewBox="0 0 1078 631">
<g transform="translate(290.30 152.30) scale(0.9500)" ><path fill="none" stroke="#8e44a3" stroke-width="1.2" stroke-linecap="round" stroke-linejoin="round" d="M7.6 3.6L2.6 8.6l5 5M2.9 8.6h8.3c3.6 0 6.2 2.6 6.2 6.6"/></g>
<g transform="translate(290.30 186.20) scale(0.9500)" ><path fill="none" stroke="#8e44a3" stroke-width="1.2" stroke-linecap="round" stroke-linejoin="round" d="M6.2 3.6L1.6 8.4l4.6 4.8M10.6 3.6L6 8.4l4.6 4.8M6.3 8.4h5.6c3.6 0 6.2 2.6 6.2 6.6"/></g>
<g transform="translate(290.30 220.60) scale(0.9500)" ><path fill="none" stroke="#3a86c0" stroke-width="1.2" stroke-linecap="round" stroke-linejoin="round" d="M12.4 3.6l5 5-5 5M17.1 8.6H8.8c-3.6 0-6.2 2.6-6.2 6.6"/></g>
<g transform="translate(290.00 264.50) scale(1.0000)" ><path fill="none" stroke="#434343" stroke-width="1.1" stroke-linecap="round" stroke-linejoin="round" d="M8 4.200a2 2 0 0 1 4 0M2.300 4.500h15.400M4.400 4.500l1.150 11.300a1.900 1.900 0 0 0 1.900 1.700h5.100a1.900 1.900 0 0 0 1.900-1.700l1.150-11.300M8.400 8v6M11.600 8v6"/></g>
<g transform="translate(293 304.9)"><path fill="none" stroke="#434343" stroke-width="1.1" stroke-linecap="round" stroke-linejoin="round" d="M2.7 -2.900L0 0l2.700 2.900M0 0h8.600a5.750 5.750 0 1 1-5.750 5.750"/></g>
<g transform="translate(290.40 333.50) scale(1.0000)" ><path fill="none" stroke="#2f73a6" stroke-width="1.15" stroke-linecap="round" stroke-linejoin="round" d="M9.2 16.3H4.3a1.9 1.9 0 0 1-1.9-1.9V5a1.9 1.9 0 0 1 1.9-1.9h2.9c.5 0 1 .2 1.3.6l1.2 1.3h5.9a1.9 1.9 0 0 1 1.9 1.9v2.3M2.4 7.6h4.9c.5 0 1-.2 1.3-.6L9.7 5"/><circle cx="14.800" cy="14.400" r="4.300" fill="#1469b5"/><path fill="none" stroke="#fff" stroke-width="1.1" stroke-linecap="round" stroke-linejoin="round" d="M12.600 14.400h4.300M15.200 12.600l1.800 1.800-1.800 1.800"/></g>
<g transform="translate(290.40 366.50) scale(1.0000)" ><path fill="none" stroke="#2f73a6" stroke-width="1.15" stroke-linecap="round" stroke-linejoin="round" d="M9.6 17.2H8a1.9 1.9 0 0 1-1.9-1.9V4.2A1.9 1.9 0 0 1 8 2.3h5.3a1.9 1.9 0 0 1 1.9 1.9v5M3.7 4.6v11.2a3 3 0 0 0 3 3h2"/><circle cx="14.800" cy="15" r="4.300" fill="#1469b5"/><path fill="none" stroke="#fff" stroke-width="1.1" stroke-linecap="round" stroke-linejoin="round" d="M12.600 15h4.300M15.200 13.200l1.800 1.800-1.800 1.800"/></g>
<g transform="translate(290.00 410.50) scale(1.0000)" ><path fill="none" stroke="#434343" stroke-width="1.1" stroke-linecap="round" stroke-linejoin="round" d="M14.200 5.200H4.400a2 2 0 0 0-2 2v7.600a2 2 0 0 0 2 2h11.200a2 2 0 0 0 2-2V8.600M2.600 7.600L10 11.600l5.200-2.800"/><circle cx="17.400" cy="4.900" r="2.200" fill="#242424"/></g>
<g transform="translate(291.10 446.50) scale(0.9500)" ><path fill="none" stroke="#3a3a3a" stroke-width="1.25" stroke-linecap="round" stroke-linejoin="round" d="M3.6 17.6V3.2M3.6 3.4h12.3l-3.2 4.4 3.2 4.4H3.6"/></g>
<g transform="translate(290.70 491.30) scale(0.9200)" ><path fill="none" stroke="#8f5258" stroke-width="1.2" stroke-linecap="round" stroke-linejoin="round" d="M10 2.400c2 1.500 4.200 2.200 7 2.300v5.200c0 4.200-2.600 7.400-7 9-4.400-1.600-7-4.800-7-9v-5.200c2.800-.1 5-.8 7-2.300z"/><path fill="none" stroke="#b47880" stroke-width="1.4" stroke-linecap="round" stroke-linejoin="round" d="M10 6.300v4.800"/><circle cx="10" cy="13.700" r=".9" fill="#b47880"/></g>
<g transform="translate(291.00 537.00) scale(0.9000)" ><path fill="none" stroke="#3d3d3d" stroke-width="1.35" stroke-linecap="round" stroke-linejoin="round" d="M3 5a2 2 0 0 1 2-2h8.3c.5 0 1 .2 1.4.6l1.7 1.7c.4.4.6.9.6 1.4V15a2 2 0 0 1-2 2H5a2 2 0 0 1-2-2zM6 3.2v3.3a1 1 0 0 0 1 1h5a1 1 0 0 0 1-1V3.2M5.8 17v-5a1 1 0 0 1 1-1h6.4a1 1 0 0 1 1 1v5"/></g>
<g transform="translate(402.30 337.60) scale(1.0000)" ><path fill="none" stroke="#434343" stroke-width="1.15" stroke-linecap="round" stroke-linejoin="round" d="M.7.6l5 5-5 5"/></g>
<g transform="translate(402.30 371.60) scale(1.0000)" ><path fill="none" stroke="#434343" stroke-width="1.15" stroke-linecap="round" stroke-linejoin="round" d="M.7.6l5 5-5 5"/></g>
<g transform="translate(402.30 495.40) scale(1.0000)" ><path fill="none" stroke="#434343" stroke-width="1.15" stroke-linecap="round" stroke-linejoin="round" d="M.7.6l5 5-5 5"/></g>
<g transform="translate(402.30 540.40) scale(1.0000)" ><path fill="none" stroke="#434343" stroke-width="1.15" stroke-linecap="round" stroke-linejoin="round" d="M.7.6l5 5-5 5"/></g>
<g transform="translate(402.30 574.40) scale(1.0000)" ><path fill="none" stroke="#434343" stroke-width="1.15" stroke-linecap="round" stroke-linejoin="round" d="M.7.6l5 5-5 5"/></g>
<g transform="translate(402.30 608.40) scale(1.0000)" ><path fill="none" stroke="#434343" stroke-width="1.15" stroke-linecap="round" stroke-linejoin="round" d="M.7.6l5 5-5 5"/></g>
</svg>
<span class="t" style="left:316.0px;top:155.0px;font-size:14.2px;color:#424242;transform:scaleX(0.9399)">Reply</span>
<span class="t" style="left:316.0px;top:189.0px;font-size:14.2px;color:#424242;transform:scaleX(0.9390)">Reply all</span>
<span class="t" style="left:316.0px;top:223.0px;font-size:14.2px;color:#424242;transform:scaleX(0.9664)">Forward</span>
<span class="t" style="left:316.0px;top:268.0px;font-size:14.2px;color:#424242;transform:scaleX(0.9801)">Delete</span>
<span class="t" style="left:316.0px;top:302.0px;font-size:14.2px;color:#424242;transform:scaleX(0.9358)">Restore</span>
<span class="t" style="left:316.0px;top:336.0px;font-size:14.2px;color:#424242;transform:scaleX(1.0114)">Move</span>
<span class="t" style="left:316.0px;top:370.0px;font-size:14.2px;color:#424242;transform:scaleX(0.9691)">Copy</span>
<span class="t" style="left:316.0px;top:415.0px;font-size:14.2px;color:#424242;transform:scaleX(0.9738)">Mark as unread</span>
<span class="t" style="left:316.0px;top:449.0px;font-size:14.2px;color:#424242;transform:scaleX(0.9308)">Flag</span>
<span class="t" style="left:316.0px;top:494.0px;font-size:14.2px;color:#424242;transform:scaleX(0.9743)">Report</span>
<span class="t" style="left:316.0px;top:539.0px;font-size:14.2px;color:#424242;transform:scaleX(0.8914)">Save as</span>
<span class="t" style="left:316.0px;top:573.0px;font-size:14.2px;color:#424242;transform:scaleX(0.9784)">Find related</span>
<span class="t" style="left:316.0px;top:607.0px;font-size:14.2px;color:#424242;transform:scaleX(0.9738)">View</span>
<div class="redbox" style="left:278.300px;top:321.900px;width:143.700px;height:38.900px"></div>
</div>
<div class="layer" id="l3">
<div id="sub"></div>
<div id="fsearch"></div>
<div id="inboxhl"></div>
<div class="sep" style="left:422px;top:438px;width:216px"></div>
<div class="sep" style="left:422px;top:483px;width:216px"></div>
<svg class="ic" width="1078" height="631" viewBox="0 0 1078 631">
<circle cx="439.600" cy="347" r="4.500" fill="none" stroke="#808080" stroke-width="1.1" stroke-linecap="round" stroke-linejoin="round"/><path fill="none" stroke="#808080" stroke-width="1.1" stroke-linecap="round" stroke-linejoin="round" d="M442.900 350.300l3.200 3.100"/>
<g transform="translate(434.00 374.00) scale(0.8000)" ><path fill="#333" d="M2.8 5.2a2.4 2.4 0 0 1 2.4-2.4h9.6a2.4 2.4 0 0 1 2.4 2.4v9.6a2.4 2.4 0 0 1-2.4 2.4H5.2a2.4 2.4 0 0 1-2.4-2.4z"/><path fill="#f3f3f3" d="M4.6 4.4h10.8a.4.4 0 0 1 .4.4v5h-3.4a2.4 2.4 0 0 1-4.8 0H4.2v-5a.4.4 0 0 1 .4-.4z"/></g>
<g transform="translate(433.90 408.00) scale(0.8000)" ><path fill="none" stroke="#616161" stroke-width="1.3" stroke-linecap="round" stroke-linejoin="round" d="M2.500 4.600a1 1 0 0 1 1-1h13a1 1 0 0 1 1 1v2.200a1 1 0 0 1-1 1h-13a1 1 0 0 1-1-1zM3.600 7.800v6.600a2 2 0 0 0 2 2h8.800a2 2 0 0 0 2-2V7.800M8.200 10.800h3.600"/></g>
</svg>
<span class="t" style="left:453.6px;top:341.0px;font-size:14.2px;color:#707070;transform:scaleX(0.9810)">Search for a folder</span>
<span class="t" style="left:458.0px;top:375.0px;font-size:14.2px;color:#242424;transform:scaleX(1.0052)">Inbox</span>
<span class="t" style="left:458.0px;top:409.0px;font-size:14.2px;color:#424242;transform:scaleX(0.9723)">Archive</span>
<span class="t" style="left:458.0px;top:454.0px;font-size:14.2px;color:#424242;transform:scaleX(0.9832)">Create new folder</span>
<span class="t" style="left:458.0px;top:499.0px;font-size:14.2px;color:#424242;transform:scaleX(1.0046)">Move to a different folder...</span>
<div class="redbox" style="left:421.100px;top:363.900px;width:214.900px;height:37.900px"></div>
</div>
<div class="redbox" style="left:56.200px;top:359.900px;width:192.900px;height:37.800px"></div>
</body>
</html>
